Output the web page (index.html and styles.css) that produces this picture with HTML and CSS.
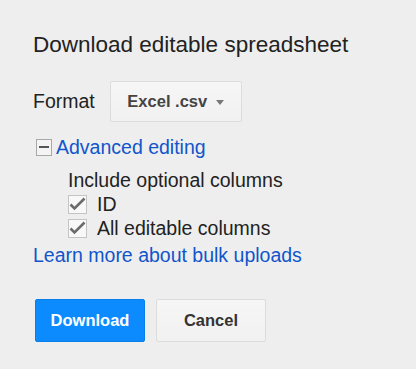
FILE: index.html
```html
<!DOCTYPE html>
<html lang="en">
<head>
  <meta charset="UTF-8">
  <meta name="viewport" content="width=device-width, initial-scale=1.0">
  <title>Download editable spreadsheet</title>
  <link rel="stylesheet" href="styles.css">
</head>
<body>

<div class="dialog">
  <h1>Download editable spreadsheet</h1>

  <div class="format-row">
    <span class="label">Format</span>
    <button type="button" class="select">Excel .csv <span class="caret"></span></button>
  </div>

  <div class="advanced">
    <span class="toggle"><span class="minus"></span></span>
    <a href="#" class="link">Advanced editing</a>
  </div>

  <div class="options">
    <div class="options-title">Include optional columns</div>
    <label class="check">
      <span class="box">
        <svg width="17" height="14" viewBox="0 0 17 14"><path d="M1.5 7.5 L5.5 11.5 L15.5 1.5" fill="none" stroke="#6b6b6b" stroke-width="2.6"/></svg>
      </span>
      ID
    </label>
    <label class="check">
      <span class="box">
        <svg width="17" height="14" viewBox="0 0 17 14"><path d="M1.5 7.5 L5.5 11.5 L15.5 1.5" fill="none" stroke="#6b6b6b" stroke-width="2.6"/></svg>
      </span>
      All editable columns
    </label>
  </div>

  <a href="#" class="link learn">Learn more about bulk uploads</a>

  <div class="buttons">
    <button type="button" class="btn primary">Download</button>
    <button type="button" class="btn">Cancel</button>
  </div>
</div>

</body>
</html>
```

FILE: styles.css
```css
body { margin: 0; background: #eeeeee; font-family: "Liberation Sans", Arial, sans-serif; color: #222; }
.dialog { padding: 29px 0 0 33px; font-size: 19.5px; }
h1 { margin: 0; font-size: 22.5px; font-weight: normal; line-height: 32px; color: #222; }

.format-row { display: flex; align-items: center; margin-top: 20px; }
.label { margin-right: 15px; }
.select { font-family: inherit; font-size: 16.5px; font-weight: bold; color: #444; height: 41px; width: 132px; padding: 0; background: linear-gradient(#f6f6f6, #f1f1f1); border: 1px solid #dcdcdc; border-radius: 2px; display: flex; align-items: center; justify-content: center; gap: 9px; }
.caret { width: 0; height: 0; border-left: 4px solid transparent; border-right: 4px solid transparent; border-top: 5px solid #777; margin-top: 2px; }

.advanced { display: flex; align-items: center; margin-top: 13px; margin-left: 3px; height: 24px; }
.toggle { width: 14px; height: 15px; border: 1px solid #a8a8a8; background: #f4f4f4; display: flex; align-items: center; justify-content: center; margin-right: 4px; }
.minus { width: 10px; height: 2px; background: #555; }
.link { color: #1155cc; text-decoration: none; }

.options { margin-left: 35px; margin-top: 9px; line-height: 24px; }
.check { display: flex; align-items: center; }
.box { width: 17px; height: 17px; border: 1px solid #c4c4c4; background: #f8f8f8; margin-right: 10px; display: flex; align-items: center; justify-content: center; }

.learn { display: block; margin-top: 3px; line-height: 24px; }

.buttons { display: flex; gap: 11px; margin-top: 32px; margin-left: 2px; }
.btn { font-family: inherit; font-size: 16.5px; font-weight: bold; color: #333; width: 110px; height: 43px; background: linear-gradient(#f6f6f6, #f1f1f1); border: 1px solid #dcdcdc; border-radius: 2px; }
.btn.primary { background: #0c8bff; border-color: #0a7fe8; color: #fff; }
```
